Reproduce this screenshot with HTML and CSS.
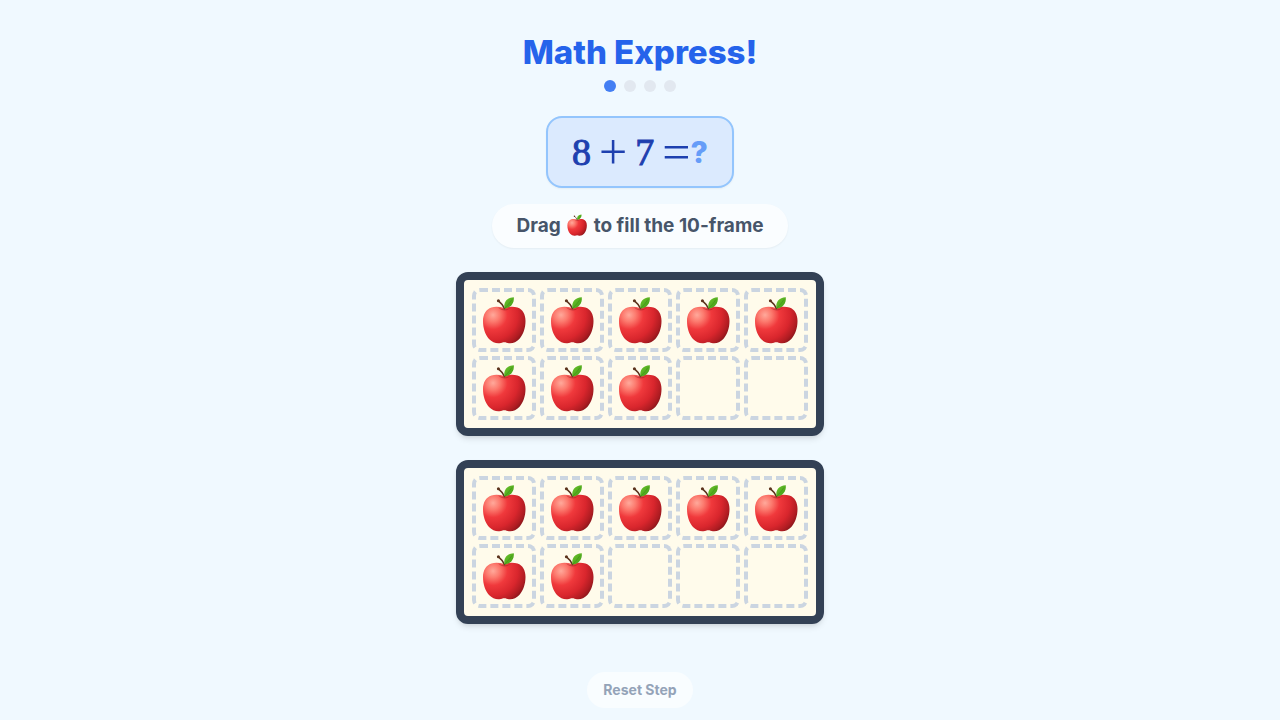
FILE: index.html
```html
<!DOCTYPE html>
<html lang="en">
<head>
<meta charset="utf-8">
<meta name="viewport" content="width=device-width, initial-scale=1">
<title>Math Express!</title>
<link rel="stylesheet" href="styles.css">
</head>
<body>
<svg class="defs" aria-hidden="true">
  <defs>
    <radialGradient id="skin" gradientUnits="userSpaceOnUse" cx="13" cy="19" r="40">
      <stop offset="0" stop-color="#ffa99b"/>
      <stop offset=".17" stop-color="#fc7a6e"/>
      <stop offset=".36" stop-color="#f0393c"/>
      <stop offset=".62" stop-color="#d9262d"/>
      <stop offset=".8" stop-color="#b01c22"/>
      <stop offset=".95" stop-color="#741318"/>
    </radialGradient>
    <linearGradient id="leaf" x1="0" y1="0" x2="1" y2="1">
      <stop offset="0" stop-color="#6fc52e"/>
      <stop offset="1" stop-color="#3f9a14"/>
    </linearGradient>
    <symbol id="apple" viewBox="0 0 48 48">
      <path fill="url(#skin)" d="M24 12C20 10.800 15.500 10.300 11.500 11.500C6 13.200 3 18.500 3 25C3 32 5 38.500 9 43C12 46.200 16 47.600 19.500 47.200C21.500 46.900 22.500 46.200 24.300 46.200C26 46.200 27 46.900 29 47.200C32.500 47.600 36.500 46.200 39.300 43C43.300 38.500 45.500 32 45.500 25C45.500 18.500 42.800 13.200 37.500 11.500C33 10.200 28 10.800 24 12Z"/>
      <path fill="#8f1820" opacity=".4" d="M18 11.200Q25 15.500 31.500 11.200Q28 14.500 25 14.500Q21 14.500 18 11.200Z"/>
      <path fill="none" stroke="#5b321c" stroke-width="1.600" stroke-linecap="round" d="M18.500 4.800Q22.500 8 24.500 12.500"/>
      <circle cx="18.400" cy="4.800" r="1.500" fill="#5b321c"/>
      <path fill="url(#leaf)" d="M24.500 12.500C23.200 6 27 1.500 33.800 1.200C34.500 7.500 30.500 12 24.500 12.500Z"/>
      <path fill="none" stroke="#347c14" stroke-width=".4" d="M25 12Q29 8 32 3.500"/>
    </symbol>
  </defs>
</svg>
<main class="game">
  <header class="header">
    <h1 class="title">Math Express!</h1>
    <div class="steps" aria-label="Step 1 of 4">
      <span class="step step-active"></span><span class="step"></span><span class="step"></span><span class="step"></span>
    </div>
  </header>
  <div class="equation">
    <span class="digit">8</span><span class="operator">+</span><span class="digit">7</span><span class="operator">=</span><span class="unknown">?</span>
  </div>
  <p class="prompt">Drag <svg class="apple-inline" role="img" aria-label="apple"><use href="#apple"/></svg> to fill the 10-frame</p>
  <div class="frames">
    <div class="frame">
      <div class="cell"><svg class="apple"><use href="#apple"/></svg></div>
      <div class="cell"><svg class="apple"><use href="#apple"/></svg></div>
      <div class="cell"><svg class="apple"><use href="#apple"/></svg></div>
      <div class="cell"><svg class="apple"><use href="#apple"/></svg></div>
      <div class="cell"><svg class="apple"><use href="#apple"/></svg></div>
      <div class="cell"><svg class="apple"><use href="#apple"/></svg></div>
      <div class="cell"><svg class="apple"><use href="#apple"/></svg></div>
      <div class="cell"><svg class="apple"><use href="#apple"/></svg></div>
      <div class="cell"></div>
      <div class="cell"></div>
    </div>
    <div class="frame">
      <div class="cell"><svg class="apple"><use href="#apple"/></svg></div>
      <div class="cell"><svg class="apple"><use href="#apple"/></svg></div>
      <div class="cell"><svg class="apple"><use href="#apple"/></svg></div>
      <div class="cell"><svg class="apple"><use href="#apple"/></svg></div>
      <div class="cell"><svg class="apple"><use href="#apple"/></svg></div>
      <div class="cell"><svg class="apple"><use href="#apple"/></svg></div>
      <div class="cell"><svg class="apple"><use href="#apple"/></svg></div>
      <div class="cell"></div>
      <div class="cell"></div>
      <div class="cell"></div>
    </div>
  </div>
  <button class="reset" type="button">Reset Step</button>
</main>
</body>
</html>
```
FILE: styles.css
```css
* { box-sizing: border-box; }
body {
  margin: 0;
  background: #f0f9ff;
  font-family: Inter, "Liberation Sans", sans-serif;
}
.defs { position: absolute; width: 0; height: 0; }
.game {
  min-height: 100vh;
  padding: 32px 16px 12px;
  display: flex;
  flex-direction: column;
  align-items: center;
}
.header {
  display: flex;
  flex-direction: column;
  align-items: center;
  gap: 8px;
  margin-bottom: 24px;
}
.title {
  margin: 0;
  font-size: 33px;
  line-height: 40px;
  font-weight: 800;
  color: #2563eb;
}
.steps { display: flex; gap: 8px; }
.step {
  width: 12px;
  height: 12px;
  border-radius: 50%;
  background: #e2e8f0;
}
.step-active { background: #437ef3; }
.equation {
  display: flex;
  align-items: center;
  padding: 14px 24px;
  margin-bottom: 16px;
  border: 2px solid #93c5fd;
  border-radius: 16px;
  background: #dbeafe;
  box-shadow: 0 1px 2px rgba(0, 0, 0, .05);
  color: #1e40af;
  font-family: "Liberation Serif", serif;
  line-height: 40px;
}
.digit { font-size: 38px; -webkit-text-stroke: 1px #1e40af; }
.operator { font-size: 50px; margin-left: 8px; }
.operator + .digit { margin-left: 8px; }
.unknown {
  font-family: Inter, "Liberation Sans", sans-serif;
  font-size: 30px;
  font-weight: 800;
  color: #669df8;
}
.prompt {
  margin: 0 0 24px;
  padding: 8px 24px;
  border-radius: 22px;
  background: #fafdff;
  box-shadow: 0 1px 2px rgba(0, 0, 0, .05);
  font-size: 19px;
  line-height: 28px;
  font-weight: 700;
  color: #475569;
}
.apple-inline { width: 24px; height: 22px; vertical-align: -4px; }
.frames {
  display: flex;
  flex-direction: column;
  gap: 24px;
  margin-bottom: 48px;
}
.frame {
  display: grid;
  grid-template-columns: repeat(5, 64px);
  gap: 4px;
  padding: 8px;
  border: 8px solid #334155;
  border-radius: 12px;
  background: #fffbeb;
  box-shadow: 0 4px 6px -1px rgba(0, 0, 0, .1), 0 2px 4px -2px rgba(0, 0, 0, .1);
}
.cell {
  height: 64px;
  display: flex;
  align-items: center;
  justify-content: center;
  border: 4px dashed #cbd5e1;
  border-radius: 8px;
}
.apple { width: 48px; height: 48px; }
.reset {
  padding: 8px 16px;
  border: 0;
  border-radius: 18px;
  background: #f9fdff;
  font-family: inherit;
  font-size: 14px;
  line-height: 20px;
  font-weight: 700;
  color: #94a3b8;
}
```
